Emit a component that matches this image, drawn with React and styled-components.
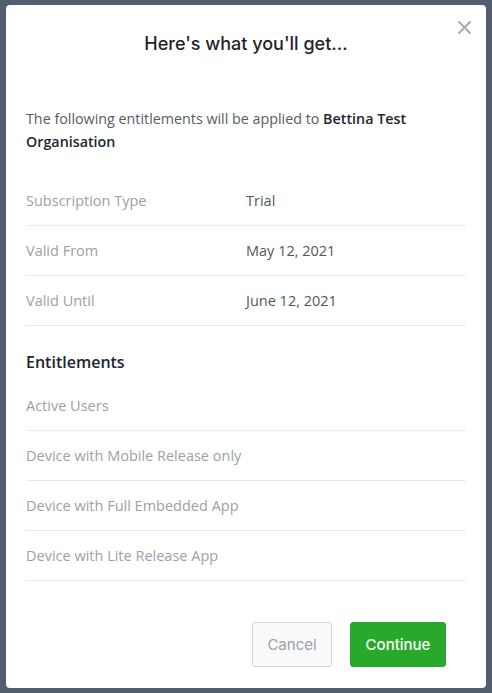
import React from "react";
import styled, { createGlobalStyle } from "styled-components";

const GlobalStyle = createGlobalStyle`
  html, body {
    margin: 0;
    padding: 0;
    background: #525d6d;
  }
  body {
    font-family: "Open Sans", "Noto Sans", sans-serif;
  }
`;

const Overlay = styled.div`
  width: 492px;
  height: 693px;
  padding: 5px 6px;
  box-sizing: border-box;
  background: #525d6d;
`;

const Modal = styled.div`
  position: relative;
  width: 480px;
  height: 683px;
  background: #fff;
  border-radius: 4px;
  box-sizing: border-box;
  padding: 27px 20px 21px;
  display: flex;
  flex-direction: column;
`;

const CloseButton = styled.button`
  position: absolute;
  top: 14px;
  right: 14px;
  width: 16px;
  height: 16px;
  padding: 0;
  border: none;
  background: none;
  cursor: pointer;
  display: flex;
  align-items: center;
  justify-content: center;
`;

const Title = styled.h2`
  margin: 0;
  font-family: Inter, Roboto, sans-serif;
  font-size: 18px;
  font-weight: 500;
  line-height: 24px;
  color: #1f2429;
  text-align: center;
`;

const Intro = styled.p`
  margin: 51px 0 0;
  font-size: 14.3px;
  line-height: 23px;
  color: #575c62;

  strong {
    font-weight: 600;
    color: #22262b;
  }
`;

const List = styled.div`
  margin-top: ${(p) => p.$gap || "23px"};
  display: flex;
  flex-direction: column;
`;

const Row = styled.div`
  display: grid;
  grid-template-columns: 220px 1fr;
  align-items: center;
  height: 50px;
  box-sizing: border-box;
  border-bottom: 1px solid #e8eaed;
  font-size: 14.5px;
`;

const Label = styled.span`
  color: #9ba1a8;
`;

const Value = styled.span`
  color: #52575d;
`;

const SectionTitle = styled.h3`
  margin: 24px 0 0;
  font-size: 16px;
  font-weight: 600;
  line-height: 24px;
  color: #22262b;
`;

const Footer = styled.div`
  margin-top: auto;
  display: flex;
  justify-content: flex-end;
  gap: 18px;
  padding-right: 20px;
`;

const Button = styled.button`
  width: ${(p) => (p.$primary ? "96px" : "80px")};
  height: 45px;
  padding: 0;
  border-radius: 3px;
  font-family: Inter, Roboto, sans-serif;
  font-size: 15px;
  font-weight: ${(p) => (p.$primary ? 500 : 400)};
  cursor: pointer;
  border: 1px solid ${(p) => (p.$primary ? "#28a92b" : "#d3d7dc")};
  background: ${(p) => (p.$primary ? "#28a92b" : "#f8f9fa")};
  color: ${(p) => (p.$primary ? "#fff" : "#9ba1a8")};
`;

const details = [
  ["Subscription Type", "Trial"],
  ["Valid From", "May 12, 2021"],
  ["Valid Until", "June 12, 2021"],
];

const entitlements = [
  "Active Users",
  "Device with Mobile Release only",
  "Device with Full Embedded App",
  "Device with Lite Release App",
];

const App = () => {
  return (
    <Overlay>
      <GlobalStyle />
      <Modal>
        <CloseButton aria-label="Close">
          <svg width="13" height="13" viewBox="0 0 13 13">
            <path
              d="M1 1 L12 12 M12 1 L1 12"
              stroke="#a4a9af"
              strokeWidth="1.8"
              strokeLinecap="round"
            />
          </svg>
        </CloseButton>
        <Title>Here's what you'll get...</Title>
        <Intro>
          The following entitlements will be applied to <strong>Bettina Test</strong>
          <br />
          <strong>Organisation</strong>
        </Intro>
        <List>
          {details.map(([label, value]) => (
            <Row key={label}>
              <Label>{label}</Label>
              <Value>{value}</Value>
            </Row>
          ))}
        </List>
        <SectionTitle>Entitlements</SectionTitle>
        <List $gap="7px">
          {entitlements.map((e) => (
            <Row key={e}>
              <Label>{e}</Label>
            </Row>
          ))}
        </List>
        <Footer>
          <Button>Cancel</Button>
          <Button $primary>Continue</Button>
        </Footer>
      </Modal>
    </Overlay>
  );
};

export default App;
